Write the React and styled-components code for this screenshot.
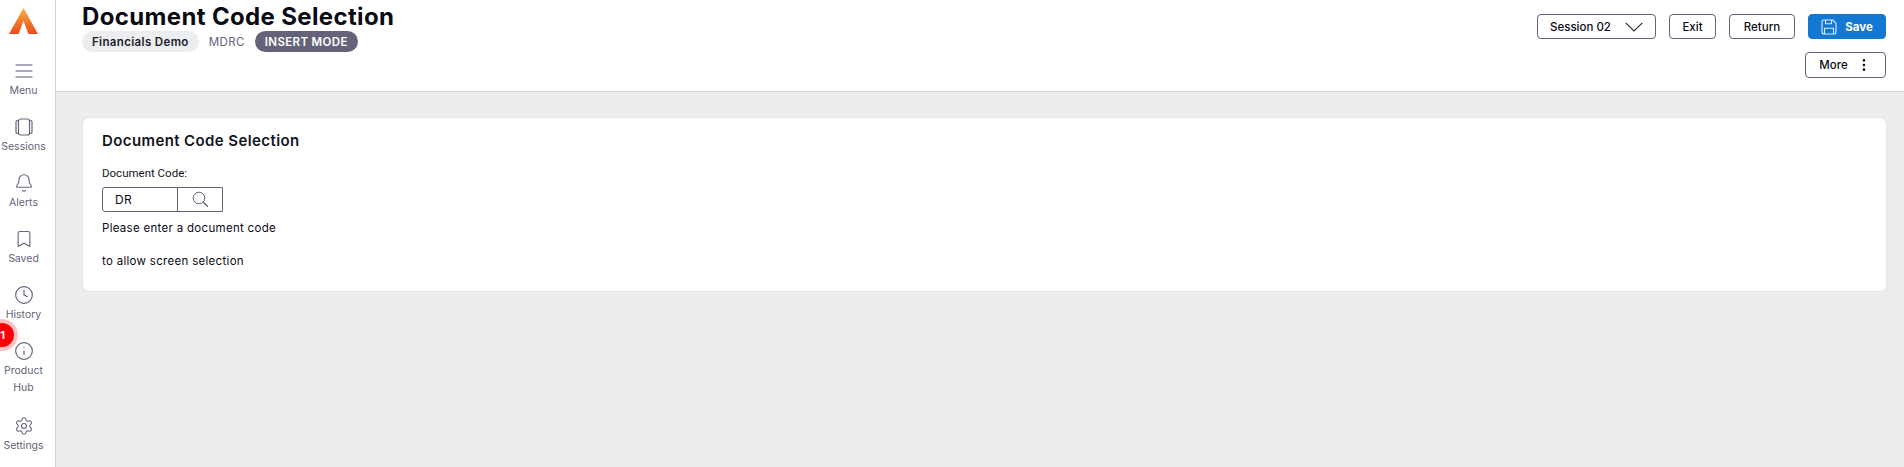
import React from "react";
import styled, { createGlobalStyle } from "styled-components";
import { Bell, Bookmark, Clock, Info, Settings, MoreVertical } from "lucide-react";

const Global = createGlobalStyle`
  html, body { margin: 0; padding: 0; height: 100%; overflow: hidden; }
  body { font-family: Inter, "Open Sans", sans-serif; color: #0b0b14; background: #ecedef; }
  #root { height: 100%; }
  * { box-sizing: border-box; }
`;
const Shell = styled.div`display: flex; height: 467px; width: 1904px;`;
const Sidebar = styled.nav`
  width: 56px; flex: none; background: #fff; border-right: 1px solid #d3d4da;
  display: flex; flex-direction: column; align-items: center; position: relative; padding: 8px 8px 0 0;
`;
const LogoMark = styled.svg`width: 29px; height: 26px; display: block; margin-bottom: 22px; flex: none;`;
const NavItem = styled.div`
  width: 47px; flex: none; display: flex; flex-direction: column; align-items: center;
  height: ${p => (p.$tall ? 75 : 56)}px; padding-top: 5px; position: relative;
  color: #64637a; font-size: 10.5px; line-height: 17px; text-align: center;
  svg { width: 20px; height: 20px; margin-bottom: 1px; flex: none; }
`;
const NavLabel = styled.span`display: block; width: 47px;`;
const Badge = styled.span`
  position: absolute; left: -10px; top: -13px; width: 24px; height: 24px; border-radius: 50%;
  background: #fb0007; box-shadow: 0 0 0 4px #fcc3c5; color: #fff; font-size: 11px; font-weight: 700;
  display: flex; align-items: center; justify-content: flex-end; padding-right: 9px;
`;
const Column = styled.div`flex: 1; display: flex; flex-direction: column; min-width: 0;`;
const Header = styled.header`
  height: 92px; flex: none; background: #fff; border-bottom: 1px solid #d3d4da;
  display: flex; justify-content: space-between; padding: 0 18px 0 26px;
`;
const TitleBlock = styled.div`display: flex; flex-direction: column;`;
const Title = styled.h1`margin: 3px 0 0; font-size: 24px; line-height: 28px; font-weight: 700; letter-spacing: 0.35px; color: #0b0b14;`;
const Chips = styled.div`display: flex; align-items: center; height: 21px;`;
const Chip = styled.span`
  height: 21px; padding: 0 10px; border-radius: 11px; display: inline-flex; align-items: center;
  font-size: 11.5px; font-weight: 600; letter-spacing: 0.35px;
  background: ${p => (p.$dark ? "#64637a" : "#ecedef")}; color: ${p => (p.$dark ? "#fff" : "#1c1c2b")};
`;
const Code = styled.span`margin: 0 10px; font-size: 11.5px; letter-spacing: 0.4px; color: #64637a;`;
const Actions = styled.div`display: flex; flex-direction: column; align-items: flex-end; padding-top: 14px; gap: 13px;`;
const ActionRow = styled.div`display: flex; gap: 13px;`;
const Button = styled.button`
  height: ${p => p.$h || 25}px; width: ${p => p.$w}px; padding: 0; border-radius: 4px; border: 1px solid ${p => (p.$primary ? "#1278d1" : "#64637a")};
  background: ${p => (p.$primary ? "#1278d1" : "#fff")}; color: ${p => (p.$primary ? "#fff" : "#0b0b14")};
  font-family: inherit; font-size: 11.5px; font-weight: ${p => (p.$primary ? 700 : 500)};
  display: inline-flex; align-items: center; justify-content: center; gap: ${p => p.$gap || 0}px;
`;
const Main = styled.main`flex: 1; padding: 26px 18px 0 27px; background: #ecedef;`;
const Card = styled.section`
  height: 173px; background: #fff; border-radius: 5px; padding: 13px 19px;
  box-shadow: 0 0 1px rgba(30, 30, 60, 0.3);
`;
const CardTitle = styled.h2`margin: 0 0 15px; font-size: 15px; line-height: 20px; font-weight: 600; letter-spacing: 0.4px; color: #14141f;`;
const FieldLabel = styled.label`display: block; font-family: Roboto, sans-serif; font-size: 11.5px; line-height: 14px; color: #14141f; margin-bottom: 7px;`;
const Field = styled.div`display: flex; width: 121px; height: 25px; border: 1px solid #64637a; border-radius: 3px 0 0 3px;`;
const FieldValue = styled.span`width: 75px; border-right: 1px solid #64637a; padding-left: 12px; font-size: 12px; letter-spacing: 0.3px; line-height: 23px;`;
const FieldIcon = styled.span`flex: 1; display: flex; align-items: center; justify-content: center; color: #64637a;`;
const Note = styled.p`margin: ${p => p.$top}px 0 0; font-size: 11.5px; line-height: 14px; letter-spacing: 0.3px; color: #0b0b14;`;

const MenuIcon = () => (
  <svg viewBox="0 0 20 20" fill="none" stroke="#8e8da0" strokeWidth="1.4" strokeLinecap="round">
    <path d="M2 4h16M2 10h16M2 16h16" />
  </svg>
);
const SessionsIcon = () => (
  <svg viewBox="0 0 20 20" fill="none" stroke="currentColor" strokeWidth="1.2" strokeLinejoin="round">
    <rect x="4.5" y="2" width="11" height="16" rx="2" />
    <path d="M4.500 3.500H3.500A1.500 1.500 0 0 0 2 5v10a1.500 1.500 0 0 0 1.500 1.500h1M15.500 3.500h1A1.500 1.500 0 0 1 18 5v10a1.500 1.500 0 0 1-1.500 1.500h-1" />
  </svg>
);
const SearchIcon = () => (
  <svg width="17" height="17" viewBox="0 0 17 17" fill="none" stroke="currentColor">
    <circle cx="7" cy="7" r="5.8" strokeWidth="1" />
    <path d="M11.200 11.200 16 15.800" strokeWidth="1.3" />
  </svg>
);
const Chevron = () => (
  <svg width="18" height="10" viewBox="0 0 18 10" fill="none" stroke="#2a2a3a" strokeWidth="1.1">
    <path d="M.6.800 9 9 17.400.800" />
  </svg>
);
const SaveIcon = () => (
  <svg width="16" height="16" viewBox="0 0 16 16" fill="none" stroke="#dcebf9" strokeWidth="1.1" strokeLinejoin="round">
    <path d="M2.500 1h9.200L15 4.300v8.700A2 2 0 0 1 13 15H3a2 2 0 0 1-2-2V2.500A1.500 1.500 0 0 1 2.500 1Z" />
    <path d="M4.500 1v3.800h6V1M3.500 15V9.200h9V15" />
  </svg>
);

const nav = [
  ["Menu", <MenuIcon key="m" />],
  ["Sessions", <SessionsIcon key="s" />],
  ["Alerts", <Bell key="a" strokeWidth={1.3} />],
  ["Saved", <Bookmark key="b" strokeWidth={1.3} />],
  ["History", <Clock key="h" strokeWidth={1.4} />],
];

export default function App() {
  return (
    <Shell>
      <Global />
      <Sidebar>
        <LogoMark viewBox="0 0 29 26">
          <defs>
            <linearGradient id="lg" x1="0" y1="0" x2="0" y2="1">
              <stop offset="0" stopColor="#f7b044" />
              <stop offset="1" stopColor="#ec4a1a" />
            </linearGradient>
          </defs>
          <path d="M14.500 0 29 26H19.500L14.500 13 9.500 26H0Z" fill="url(#lg)" />
        </LogoMark>
        {nav.map(([label, icon]) => (
          <NavItem key={label}>{icon}<NavLabel>{label}</NavLabel></NavItem>
        ))}
        <NavItem $tall>
          <Badge>1</Badge>
          <Info strokeWidth={1.4} />
          <NavLabel>Product Hub</NavLabel>
        </NavItem>
        <NavItem><Settings strokeWidth={1.3} /><NavLabel>Settings</NavLabel></NavItem>
      </Sidebar>
      <Column>
        <Header>
          <TitleBlock>
            <Title>Document Code Selection</Title>
            <Chips>
              <Chip>Financials Demo</Chip>
              <Code>MDRC</Code>
              <Chip $dark>INSERT MODE</Chip>
            </Chips>
          </TitleBlock>
          <Actions>
            <ActionRow>
              <Button $w={119} $gap={14}>Session 02 <Chevron /></Button>
              <Button $w={47}>Exit</Button>
              <Button $w={66}>Return</Button>
              <Button $w={78} $primary $gap={8}><SaveIcon />Save</Button>
            </ActionRow>
            <Button $w={81} $h={26} $gap={8}>More <MoreVertical size={16} strokeWidth={2} /></Button>
          </Actions>
        </Header>
        <Main>
          <Card>
            <CardTitle>Document Code Selection</CardTitle>
            <FieldLabel>Document Code:</FieldLabel>
            <Field>
              <FieldValue>DR</FieldValue>
              <FieldIcon><SearchIcon /></FieldIcon>
            </Field>
            <Note $top={9}>Please enter a document code</Note>
            <Note $top={19}>to allow screen selection</Note>
          </Card>
        </Main>
      </Column>
    </Shell>
  );
}
